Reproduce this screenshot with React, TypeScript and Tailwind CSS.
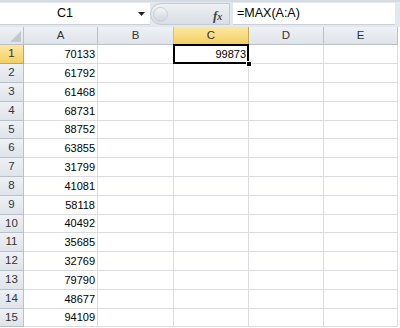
import React from 'react';

const values = [70133, 61792, 61468, 68731, 88752, 63855, 31799, 41081, 58118, 40492, 35685, 32769, 79790, 48677, 94109];
const cols = ['A', 'B', 'C', 'D', 'E'];
const widths = ['w-[74px]', 'w-[76px]', 'w-[75px]', 'w-[75px]', 'w-[74px]'];

export default function App() {
  return (
    <div
      className="w-[400px] h-[328px] overflow-hidden bg-white text-[#000]"
      style={{ fontFamily: '"Liberation Sans", Arial, sans-serif' }}
    >
      {/* Formula bar */}
      <div className="h-[27px] bg-[#e3e8ee] border-t-2 border-[#d5dbe2] flex items-start pt-[1px]">
        <div className="w-[150px] h-[22px] bg-white border-b border-[#c9d0d8] flex items-center relative">
          <span className="flex-1 text-center text-[12.5px] pr-[20px]">C1</span>
          <svg className="absolute left-[138px] top-[9px]" width="7" height="4" viewBox="0 0 7 4">
            <path d="M0 0h7L3.5 4z" fill="#222" />
          </svg>
        </div>
        <div className="w-[83px] h-[22px] flex items-center">
          <div className="h-[22px] w-[80px] rounded-l-full bg-gradient-to-b from-[#eef1f4] to-[#d9dee5] border border-[#c4cbd3] flex items-center relative">
            <div className="w-[15px] h-[15px] ml-[2px] rounded-full bg-gradient-to-b from-[#f4f6f8] to-[#cfd5dc] border border-[#c9ced5]" />
            <span
              className="absolute left-[62px] top-[2px] text-[13px] italic font-bold text-[#444]"
              style={{ fontFamily: '"Liberation Serif", serif' }}
            >
              f<span className="text-[10px]">x</span>
            </span>
          </div>
        </div>
        <div className="w-[162px] h-[22px] bg-white border-b border-[#c9d0d8] flex items-center pl-[4px] text-[12.5px]">
          =MAX(A:A)
        </div>
      </div>

      {/* Column headers */}
      <div className="flex h-[18px]">
        <div className="w-[24px] bg-gradient-to-b from-[#eef1f5] to-[#dfe4ea] border-r border-b border-[#b9c0c8] relative">
          <svg className="absolute right-[2px] bottom-[2px]" width="11" height="11" viewBox="0 0 11 11">
            <path d="M11 0V11H0z" fill="#c3c8ce" />
          </svg>
        </div>
        {cols.map((c, i) => (
          <div
            key={c}
            className={`${widths[i]} flex items-center justify-center text-[11.5px] border-r border-b ${
              c === 'C'
                ? 'bg-gradient-to-b from-[#fbe7a3] to-[#f5cf5f] border-[#c9a552] text-[#333]'
                : 'bg-gradient-to-b from-[#eef1f5] to-[#dfe4ea] border-[#b9c0c8] text-[#333]'
            }`}
          >
            {c}
          </div>
        ))}
      </div>

      {/* Rows */}
      {values.map((v, r) => (
        <div key={r} className={`flex ${r % 5 === 4 ? 'h-[18px]' : 'h-[19px]'}`}>
          <div
            className={`w-[24px] flex items-center justify-center text-[11.5px] text-[#333] border-r border-b ${
              r === 0
                ? 'bg-gradient-to-b from-[#fbe7a3] to-[#f5cf5f] border-[#c9a552]'
                : 'bg-gradient-to-b from-[#eef1f5] to-[#dfe4ea] border-[#b9c0c8]'
            }`}
          >
            {r + 1}
          </div>
          {cols.map((c, i) => (
            <div
              key={c}
              className={`${widths[i]} border-r border-b border-[#dadcdf] flex items-center justify-end pr-[2px] text-[11px] relative`}
            >
              {c === 'A' && v}
              {c === 'C' && r === 0 && (
                <>
                  <span className="relative z-10">99873</span>
                  <div className="absolute -left-[1px] -top-[1px] -right-[1px] -bottom-[1px] border-2 border-black z-10" />
                  <div className="absolute -right-[4px] -bottom-[4px] w-[6px] h-[6px] bg-black border border-white z-20" />
                </>
              )}
            </div>
          ))}
        </div>
      ))}
    </div>
  );
}
